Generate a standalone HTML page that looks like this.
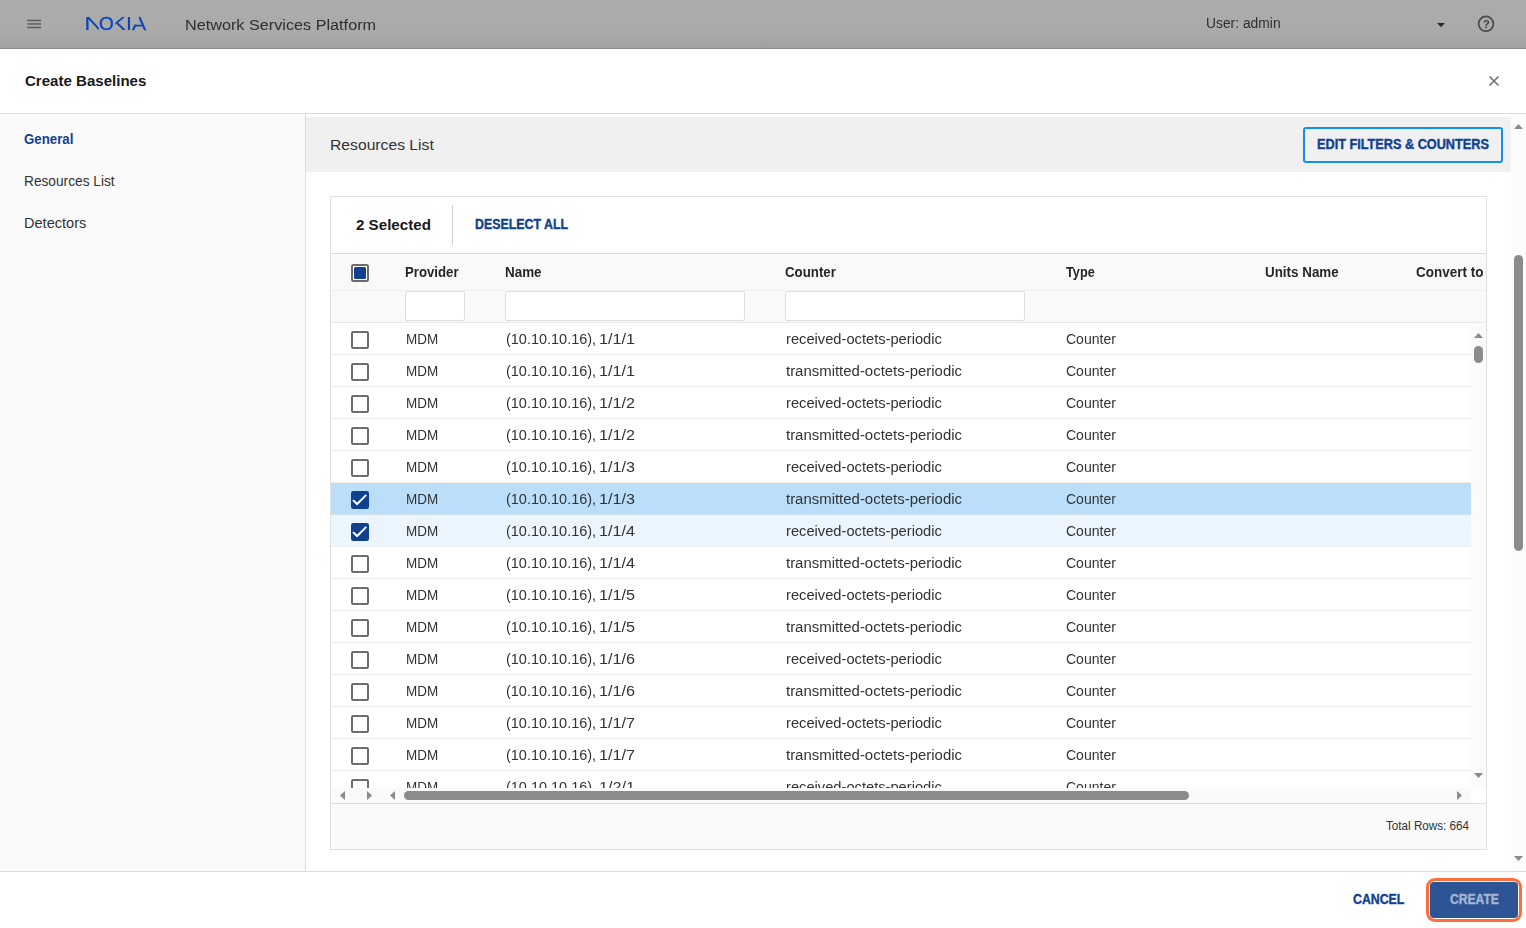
<!DOCTYPE html>
<html lang="en">
<head>
<meta charset="utf-8">
<title>Network Services Platform</title>
<style>
*{box-sizing:border-box;margin:0;padding:0}
html,body{width:1526px;height:928px;overflow:hidden;background:#fff}
body{font-family:"Liberation Sans",sans-serif;color:#333;font-size:14px;position:relative}
.abs{position:absolute}
.hl{position:absolute;left:0;top:0;width:1526px;height:48px;will-change:transform}
.gl{position:absolute;left:0;top:0;width:1486px;height:300px;will-change:transform}
.t{position:absolute;display:block;white-space:pre;line-height:20px;font-size:14px;color:#333;transform-origin:0 0}
#top{position:absolute;left:0;top:0;width:1526px;height:49px;background:linear-gradient(#ababab 0,#ababab 26px,#a8a8a8 37px,#a3a3a3 44px,#9f9f9f 48px,#8b8b8b 48px,#8b8b8b 49px)}
#tbar{position:absolute;left:0;top:49px;width:1526px;height:65px;background:#fff;border-bottom:1px solid #dedede}
#side{position:absolute;left:0;top:114px;width:306px;height:757px;background:#fafafa;border-right:1px solid #dcdcdc}
#main{position:absolute;left:306px;top:114px;width:1205px;height:757px;background:#fff}
#band{position:absolute;left:306px;top:117px;width:1205px;height:55px;background:#f0f0f0}
#editbtn{position:absolute;left:1303px;top:127px;width:200px;height:36px;border:2px solid #1190f4;border-radius:3px}
#pscroll{position:absolute;left:1511px;top:114px;width:15px;height:757px;background:#fcfcfc}
#card{position:absolute;left:330px;top:196px;width:1157px;height:654px;border:1px solid #e0e0e0;background:#fff}
#tool{position:absolute;left:331px;top:197px;width:1155px;height:57px;border-bottom:1px solid #dcdcdc;background:#fff}
#tdiv{position:absolute;left:452px;top:205px;width:1px;height:40px;background:#d0d0d0}
#hdr{position:absolute;left:331px;top:254px;width:1155px;height:37px;background:#f9f9f9;border-bottom:1px solid #efefef}
#flt{position:absolute;left:331px;top:291px;width:1155px;height:32px;background:#f9f9f9;border-bottom:1px solid #e8e8e8}
#flt i{position:absolute;top:0;height:30px;background:#fff;border:1px solid #dedede;border-radius:2px}
#rows{position:absolute;left:331px;top:323px;width:1140px;height:465px;overflow:hidden;background:#fff;will-change:transform}
.row{position:relative;height:32px;border-bottom:1px solid #ececec;background:#fff}
.row.pre{border-bottom-color:#f6f2f0}
.row.sel1{background:#bbdffb;border-bottom-color:#d3dde5}
.row.sel2{background:#eaf5fe;border-bottom-color:#e8eff4}
.cb{position:absolute;left:20px;top:8px;width:18px;height:18px;display:block}
.cb.un{border:2px solid #6e6e6e;border-radius:2px;background:#fff}
#vs{position:absolute;left:1471px;top:323px;width:15px;height:465px;background:#fbfbfb}
#hs{position:absolute;left:331px;top:788px;width:1140px;height:15px;background:#fafafa}
#foot{position:absolute;left:331px;top:803px;width:1155px;height:46px;background:#fafafa;border-top:1px solid #dcdcdc}
#bot{position:absolute;left:0;top:871px;width:1526px;height:57px;background:#fff;border-top:1px solid #dcdcdc}
#ring{position:absolute;left:1426px;top:878px;width:96px;height:44px;border:3px solid #ff6d3a;border-radius:9px;background:#fff}
#createbtn{position:absolute;left:1430px;top:882px;width:88px;height:36px;background:#2d5596;border-radius:4px}
</style>
</head>
<body>
<div id="top"></div>
<svg class="abs" style="left:0;top:0" width="1526" height="49" viewBox="0 0 1526 49">
  <g fill="#5c5c5c"><rect x="27.2" y="19.7" width="13.7" height="1.5"/><rect x="27.2" y="23.2" width="13.7" height="1.5"/><rect x="27.2" y="26.7" width="13.7" height="1.5"/></g>
  <polygon points="1437,23 1445,23 1441,27.2" fill="#2b2b2b"/>
  <circle cx="1486" cy="23.8" r="7.4" fill="none" stroke="#4a4a4a" stroke-width="1.7"/>
</svg>
<div class="hl"><svg class="abs" style="left:0;top:0" width="160" height="49" viewBox="0 0 160 49" role="img" aria-label="NOKIA"><title>NOKIA</title><defs><clipPath id="lgN"><polygon points="80,14 98.70,14 98.70,33 80,33"/></clipPath><clipPath id="lgK"><polygon points="115.33,14 130,14 130,33 115.33,33"/></clipPath><clipPath id="lgA"><polygon points="130.92,30.81 147.53,30.81 147.53,16.27 138.60,16.27 138.60,17.10 139.23,18.41 138.19,24.54 130.92,24.54"/></clipPath></defs><g clip-path="url(#lgN)"><text transform="translate(84.05,29.9) scale(1.4722,1)" font-family="Liberation Sans,sans-serif" font-size="18.60" fill="#0a46b8" stroke="#0a46b8" stroke-width="0">N</text></g><text transform="translate(99.00,29.9) scale(1.0236,1)" font-family="Liberation Sans,sans-serif" font-size="18.60" fill="#0a46b8" stroke="#0a46b8" stroke-width="0.35">O</text><g clip-path="url(#lgK)"><text transform="translate(110.55,29.9) scale(1.2417,1)" font-family="Liberation Sans,sans-serif" font-size="18.60" fill="#0a46b8" stroke="#0a46b8" stroke-width="0.15">K</text></g><text transform="translate(125.92,29.9) scale(1.1527,1)" font-family="Liberation Sans,sans-serif" font-size="18.60" fill="#0a46b8" stroke="#0a46b8" stroke-width="0.1">I</text><g clip-path="url(#lgA)"><text transform="translate(131.96,29.9) scale(1.1429,1)" font-family="Liberation Sans,sans-serif" font-size="18.60" fill="#0a46b8" stroke="#0a46b8" stroke-width="0.25">A</text></g></svg><span class="t" style="left:185px;top:15px;font-size:15.5px;color:#2e2e2e;transform:scaleX(1.0463)">Network Services Platform</span>
<span class="t" style="left:1206px;top:13px;font-size:14px;color:#2e2e2e;transform:scaleX(0.9882)">User: admin</span></div>
<span class="t" style="left:1483px;top:15px;font-size:11px;font-weight:bold;color:#3c3c3c;line-height:18px">?</span>
<div id="tbar"></div>
<span class="t" style="left:25px;top:71px;font-size:15px;font-weight:bold;color:#1a1a1a;transform:scaleX(1.0038)">Create Baselines</span>
<svg class="abs" style="left:1488px;top:75px" width="12" height="12" viewBox="0 0 12 12"><path d="M1.5 1.5 L10.5 10.5 M10.5 1.5 L1.5 10.5" stroke="#727272" stroke-width="1.7" fill="none"/></svg>
<div id="side"></div>
<span class="t" style="left:24px;top:129px;font-size:14px;font-weight:bold;color:#124191;transform:scaleX(0.9461)">General</span>
<span class="t" style="left:24px;top:171px;font-size:14px;color:#333;transform:scaleX(0.9788)">Resources List</span>
<span class="t" style="left:24px;top:213px;font-size:14px;color:#333;transform:scaleX(1.0402)">Detectors</span>
<div id="main"></div>
<div id="band"></div>
<span class="t" style="left:330px;top:135px;font-size:15.5px;color:#333;transform:scaleX(1.0125)">Resources List</span>
<div id="editbtn"></div>
<span class="t" style="-webkit-text-stroke:0.4px #124191;left:1317px;top:134px;font-size:14px;font-weight:bold;color:#124191;transform:scaleX(0.9069)">EDIT FILTERS &amp; COUNTERS</span>
<div id="pscroll"></div>
<div id="card"></div>
<div id="tool"></div>
<span class="t" style="left:356px;top:215px;font-size:15px;font-weight:bold;color:#1a1a1a;transform:scaleX(1.0090)">2 Selected</span>
<div id="tdiv"></div>
<span class="t" style="-webkit-text-stroke:0.4px #124191;left:475px;top:214px;font-size:14px;font-weight:bold;color:#124191;transform:scaleX(0.8846)">DESELECT ALL</span>
<div id="hdr"></div>
<svg class="abs" style="left:350px;top:263px" width="20" height="20" viewBox="0 0 20 20"><rect x="0.5" y="0.5" width="19" height="19" rx="3" fill="#fff"/><rect x="2" y="2" width="16" height="16" rx="1.5" fill="#fff" stroke="#6b6b6b" stroke-width="2"/><rect x="4" y="4" width="12" height="12" rx="1.2" fill="#11408f"/></svg>
<div class="gl"><span class="t" style="left:405px;top:262px;font-size:14px;font-weight:bold;color:#262626;transform:scaleX(0.9438)">Provider</span><span class="t" style="left:505px;top:262px;font-size:14px;font-weight:bold;color:#262626;transform:scaleX(0.9585)">Name</span><span class="t" style="left:785px;top:262px;font-size:14px;font-weight:bold;color:#262626;transform:scaleX(0.9473)">Counter</span><span class="t" style="left:1066px;top:262px;font-size:14px;font-weight:bold;color:#262626;transform:scaleX(0.9072)">Type</span><span class="t" style="left:1265px;top:262px;font-size:14px;font-weight:bold;color:#262626;transform:scaleX(0.9575)">Units Name</span><span class="t" style="left:1416px;top:262px;font-size:14px;font-weight:bold;color:#262626;transform:scaleX(0.9630)">Convert to</span></div>
<div id="flt"><i style="left:74px;width:60px"></i><i style="left:174px;width:240px"></i><i style="left:454px;width:240px"></i></div>
<div id="rows">
<div class="row "><i class="cb un"></i><span class="t" style="left:75px;top:6px;transform:scaleX(0.9610)">MDM</span><span class="t" style="left:175px;top:6px;transform:scaleX(1.0341)">(10.10.10.16), </span><span class="t" style="left:268px;top:6px;transform:scaleX(1.1564)">1/1/1</span><span class="t" style="left:455px;top:6px;transform:scaleX(1.0486)">received-octets-periodic</span><span class="t" style="left:735px;top:6px;transform:scaleX(1.0014)">Counter</span></div>
<div class="row "><i class="cb un"></i><span class="t" style="left:75px;top:6px;transform:scaleX(0.9610)">MDM</span><span class="t" style="left:175px;top:6px;transform:scaleX(1.0341)">(10.10.10.16), </span><span class="t" style="left:268px;top:6px;transform:scaleX(1.1564)">1/1/1</span><span class="t" style="left:455px;top:6px;transform:scaleX(1.0669)">transmitted-octets-periodic</span><span class="t" style="left:735px;top:6px;transform:scaleX(1.0014)">Counter</span></div>
<div class="row "><i class="cb un"></i><span class="t" style="left:75px;top:6px;transform:scaleX(0.9610)">MDM</span><span class="t" style="left:175px;top:6px;transform:scaleX(1.0341)">(10.10.10.16), </span><span class="t" style="left:268px;top:6px;transform:scaleX(1.1564)">1/1/2</span><span class="t" style="left:455px;top:6px;transform:scaleX(1.0486)">received-octets-periodic</span><span class="t" style="left:735px;top:6px;transform:scaleX(1.0014)">Counter</span></div>
<div class="row "><i class="cb un"></i><span class="t" style="left:75px;top:6px;transform:scaleX(0.9610)">MDM</span><span class="t" style="left:175px;top:6px;transform:scaleX(1.0341)">(10.10.10.16), </span><span class="t" style="left:268px;top:6px;transform:scaleX(1.1564)">1/1/2</span><span class="t" style="left:455px;top:6px;transform:scaleX(1.0669)">transmitted-octets-periodic</span><span class="t" style="left:735px;top:6px;transform:scaleX(1.0014)">Counter</span></div>
<div class="row pre"><i class="cb un"></i><span class="t" style="left:75px;top:6px;transform:scaleX(0.9610)">MDM</span><span class="t" style="left:175px;top:6px;transform:scaleX(1.0341)">(10.10.10.16), </span><span class="t" style="left:268px;top:6px;transform:scaleX(1.1564)">1/1/3</span><span class="t" style="left:455px;top:6px;transform:scaleX(1.0486)">received-octets-periodic</span><span class="t" style="left:735px;top:6px;transform:scaleX(1.0014)">Counter</span></div>
<div class="row sel1"><svg class="cb" width="18" height="18" viewBox="0 0 18 18"><rect x="0" y="0" width="18" height="18" rx="2.2" fill="#11408f"/><path d="M2 9.1 L6.1 13 L15.3 3.9" fill="none" stroke="#fff" stroke-width="2"/></svg><span class="t" style="left:75px;top:6px;transform:scaleX(0.9610)">MDM</span><span class="t" style="left:175px;top:6px;transform:scaleX(1.0341)">(10.10.10.16), </span><span class="t" style="left:268px;top:6px;transform:scaleX(1.1564)">1/1/3</span><span class="t" style="left:455px;top:6px;transform:scaleX(1.0669)">transmitted-octets-periodic</span><span class="t" style="left:735px;top:6px;transform:scaleX(1.0014)">Counter</span></div>
<div class="row sel2"><svg class="cb" width="18" height="18" viewBox="0 0 18 18"><rect x="0" y="0" width="18" height="18" rx="2.2" fill="#11408f"/><path d="M2 9.1 L6.1 13 L15.3 3.9" fill="none" stroke="#fff" stroke-width="2"/></svg><span class="t" style="left:75px;top:6px;transform:scaleX(0.9610)">MDM</span><span class="t" style="left:175px;top:6px;transform:scaleX(1.0341)">(10.10.10.16), </span><span class="t" style="left:268px;top:6px;transform:scaleX(1.1564)">1/1/4</span><span class="t" style="left:455px;top:6px;transform:scaleX(1.0486)">received-octets-periodic</span><span class="t" style="left:735px;top:6px;transform:scaleX(1.0014)">Counter</span></div>
<div class="row "><i class="cb un"></i><span class="t" style="left:75px;top:6px;transform:scaleX(0.9610)">MDM</span><span class="t" style="left:175px;top:6px;transform:scaleX(1.0341)">(10.10.10.16), </span><span class="t" style="left:268px;top:6px;transform:scaleX(1.1564)">1/1/4</span><span class="t" style="left:455px;top:6px;transform:scaleX(1.0669)">transmitted-octets-periodic</span><span class="t" style="left:735px;top:6px;transform:scaleX(1.0014)">Counter</span></div>
<div class="row "><i class="cb un"></i><span class="t" style="left:75px;top:6px;transform:scaleX(0.9610)">MDM</span><span class="t" style="left:175px;top:6px;transform:scaleX(1.0341)">(10.10.10.16), </span><span class="t" style="left:268px;top:6px;transform:scaleX(1.1564)">1/1/5</span><span class="t" style="left:455px;top:6px;transform:scaleX(1.0486)">received-octets-periodic</span><span class="t" style="left:735px;top:6px;transform:scaleX(1.0014)">Counter</span></div>
<div class="row "><i class="cb un"></i><span class="t" style="left:75px;top:6px;transform:scaleX(0.9610)">MDM</span><span class="t" style="left:175px;top:6px;transform:scaleX(1.0341)">(10.10.10.16), </span><span class="t" style="left:268px;top:6px;transform:scaleX(1.1564)">1/1/5</span><span class="t" style="left:455px;top:6px;transform:scaleX(1.0669)">transmitted-octets-periodic</span><span class="t" style="left:735px;top:6px;transform:scaleX(1.0014)">Counter</span></div>
<div class="row "><i class="cb un"></i><span class="t" style="left:75px;top:6px;transform:scaleX(0.9610)">MDM</span><span class="t" style="left:175px;top:6px;transform:scaleX(1.0341)">(10.10.10.16), </span><span class="t" style="left:268px;top:6px;transform:scaleX(1.1564)">1/1/6</span><span class="t" style="left:455px;top:6px;transform:scaleX(1.0486)">received-octets-periodic</span><span class="t" style="left:735px;top:6px;transform:scaleX(1.0014)">Counter</span></div>
<div class="row "><i class="cb un"></i><span class="t" style="left:75px;top:6px;transform:scaleX(0.9610)">MDM</span><span class="t" style="left:175px;top:6px;transform:scaleX(1.0341)">(10.10.10.16), </span><span class="t" style="left:268px;top:6px;transform:scaleX(1.1564)">1/1/6</span><span class="t" style="left:455px;top:6px;transform:scaleX(1.0669)">transmitted-octets-periodic</span><span class="t" style="left:735px;top:6px;transform:scaleX(1.0014)">Counter</span></div>
<div class="row "><i class="cb un"></i><span class="t" style="left:75px;top:6px;transform:scaleX(0.9610)">MDM</span><span class="t" style="left:175px;top:6px;transform:scaleX(1.0341)">(10.10.10.16), </span><span class="t" style="left:268px;top:6px;transform:scaleX(1.1564)">1/1/7</span><span class="t" style="left:455px;top:6px;transform:scaleX(1.0486)">received-octets-periodic</span><span class="t" style="left:735px;top:6px;transform:scaleX(1.0014)">Counter</span></div>
<div class="row "><i class="cb un"></i><span class="t" style="left:75px;top:6px;transform:scaleX(0.9610)">MDM</span><span class="t" style="left:175px;top:6px;transform:scaleX(1.0341)">(10.10.10.16), </span><span class="t" style="left:268px;top:6px;transform:scaleX(1.1564)">1/1/7</span><span class="t" style="left:455px;top:6px;transform:scaleX(1.0669)">transmitted-octets-periodic</span><span class="t" style="left:735px;top:6px;transform:scaleX(1.0014)">Counter</span></div>
<div class="row "><i class="cb un"></i><span class="t" style="left:75px;top:6px;transform:scaleX(0.9610)">MDM</span><span class="t" style="left:175px;top:6px;transform:scaleX(1.0341)">(10.10.10.16), </span><span class="t" style="left:268px;top:6px;transform:scaleX(1.1564)">1/2/1</span><span class="t" style="left:455px;top:6px;transform:scaleX(1.0486)">received-octets-periodic</span><span class="t" style="left:735px;top:6px;transform:scaleX(1.0014)">Counter</span></div>
</div>
<div id="vs"></div>
<div id="hs"></div>
<div id="foot"></div>
<span class="t" style="left:1386px;top:816px;font-size:12px;color:#333;transform:scaleX(0.9726)">Total Rows: 664</span>
<div id="bot"></div>
<span class="t" style="-webkit-text-stroke:0.4px #124191;left:1353px;top:889px;font-size:14px;font-weight:bold;color:#124191;transform:scaleX(0.8805)">CANCEL</span>
<div id="ring"></div>
<div id="createbtn"></div>
<span class="t" style="-webkit-text-stroke:0.4px #a3b4d3;left:1450px;top:889px;font-size:14px;font-weight:bold;color:#a3b4d3;transform:scaleX(0.8652)">CREATE</span>
<svg class="abs" style="left:0;top:0;pointer-events:none" width="1526" height="928" viewBox="0 0 1526 928"><polygon points="1514,129 1518.5,124 1523,129" fill="#8b8b8b"/><rect x="1514" y="255" width="9" height="296" rx="4.5" fill="#8b8b8b"/><polygon points="1514,856 1518.5,861 1523,856" fill="#8b8b8b"/><polygon points="1474,338 1478.5,333 1483,338" fill="#8b8b8b"/><rect x="1474" y="346" width="9" height="17" rx="4.5" fill="#8b8b8b"/><polygon points="1474,773 1478.5,778 1483,773" fill="#8b8b8b"/><polygon points="345,791 340,795.5 345,800" fill="#8b8b8b"/><polygon points="367,791 372,795.5 367,800" fill="#8b8b8b"/><polygon points="395,791 390,795.5 395,800" fill="#8b8b8b"/><rect x="404" y="791" width="785" height="9" rx="4.5" fill="#8b8b8b"/><polygon points="1457,791 1462,795.5 1457,800" fill="#8b8b8b"/></svg>
</body>
</html>
